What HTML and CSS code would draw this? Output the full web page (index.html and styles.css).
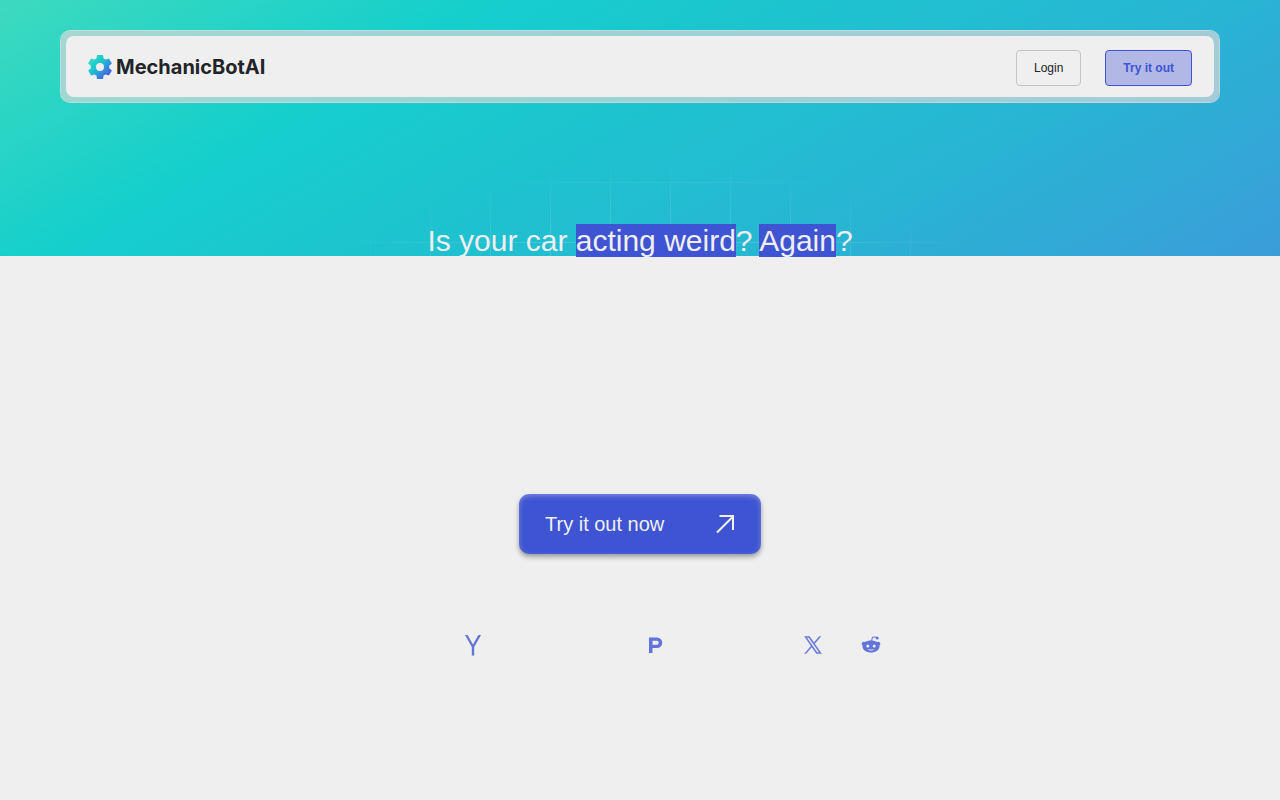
FILE: index.html
```
<!DOCTYPE html>
<html lang="en">
  <head>
    <meta charset="utf-8">
    <meta name="viewport" content="width=device-width, initial-scale=1">
    <title>MechanicBotAI</title>
    <link rel="stylesheet" href="styles.css">
  </head>
  <body>
    <div class="backdrop"></div>
    <div class="page">
      <header class="navbar">
        <nav class="navbar-inner">
          <a class="logo" href="/">
            <svg class="logo-icon" viewBox="0 0 24 24" aria-hidden="true">
              <defs>
                <linearGradient id="gear" x1="0" y1="0" x2="1" y2="1">
                  <stop offset="0.1" stop-color="#3ddabe" />
                  <stop offset="0.4" stop-color="#1bc8cf" />
                  <stop offset="0.85" stop-color="#4760e0" />
                </linearGradient>
              </defs>
              <path fill="url(#gear)" fill-rule="evenodd" d="M9 0h6l.6 3.4 2 1.2L20.900 3.400l3 5.200-2.700 2.200v2.400l2.700 2.200-3 5.200-3.300-1.200-2 1.200L15 24H9l-.6-3.400-2-1.200-3.300 1.200-3-5.200 2.700-2.200v-2.400L.1 8.600l3-5.200 3.300 1.200 2-1.200zM12 8a4 4 0 1 0 0 8 4 4 0 0 0 0-8z" />
            </svg>
            MechanicBotAI
          </a>
          <div class="actions">
            <button class="btn" type="button">Login</button>
            <button class="btn btn-primary" type="button">Try it out</button>
          </div>
        </nav>
      </header>
      <main class="hero">
        <h1>Is your car <mark>acting weird</mark>? <mark>Again</mark>?</h1>
        <button class="cta" type="button">
          Try it out now
          <svg class="cta-icon" viewBox="0 0 20 20" aria-hidden="true">
            <path d="M2 18.500 18 2.500M4.500 2H18v14" />
          </svg>
        </button>
        <div class="social">
          <a class="wide" href="#" aria-label="Hacker News">
            <svg viewBox="0 0 20 20"><path d="M2 0h2.600L10 9.500 15.400 0H18l-6.800 12v8.500H8.800V12z" /></svg>
          </a>
          <a class="medium" href="#" aria-label="Product Hunt">
            <svg viewBox="0 0 20 20"><path fill-rule="evenodd" d="M4 2.500h8a5 5 0 0 1 0 10.500H7.500v5H4zM7.500 5.800v4h4.200a2 2 0 0 0 0-4z" /></svg>
          </a>
          <a href="#" aria-label="X">
            <svg class="x-icon" viewBox="-2 -2 28 28"><path d="M14.234 10.162 22.977 0h-2.072l-7.591 8.824L7.251 0H.258l9.168 13.343L.258 24H2.330l8.016-9.318L16.749 24h6.993zm-2.837 3.299-.929-1.329L3.076 1.560h3.182l5.965 8.532.929 1.329 7.754 11.090h-3.182z" /></svg>
          </a>
          <a href="#" aria-label="Reddit">
            <svg viewBox="0 0 20 20">
              <path fill-rule="evenodd" d="M10 5.500c2.400 0 4.600.6 6.200 1.600a2 2 0 1 1 2.200 3.400c.1.300.1.600.1 1 0 3.400-3.900 6-8.500 6s-8.500-2.600-8.500-6c0-.4 0-.7.100-1A2 2 0 1 1 3.800 7.100C5.400 6.100 7.600 5.500 10 5.500zM6.800 9.400a1.500 1.500 0 1 0 0 3 1.500 1.500 0 0 0 0-3zm6.400 0a1.500 1.500 0 1 0 0 3 1.500 1.500 0 0 0 0-3zM6.500 13.900c1.800 2.100 5.200 2.100 7 0-2 .9-5 .9-7 0z" />
              <path class="antenna" d="m10.500 6 1-4 4.300.300" />
              <circle cx="16.200" cy="2.900" r="1.500" />
            </svg>
          </a>
        </div>
      </main>
    </div>
  </body>
</html>
```
FILE: styles.css
```
* {
  box-sizing: border-box;
}
body {
  margin: 0;
  min-height: 100vh;
  background: #efefef;
  color: #222428;
  font-family: 'Liberation Sans', Arial, sans-serif;
}
button {
  font-family: inherit;
  cursor: pointer;
}
.backdrop {
  position: absolute;
  top: 0;
  left: 0;
  right: 0;
  height: 256px;
  background: linear-gradient(150deg, #3ddabe, #15cfcc 28%, #27b6d3 70%, #3a9dd9);
}
.page {
  position: relative;
}
/* faint grid that fades out around the headline */
.page::before {
  content: '';
  position: absolute;
  top: 2px;
  left: 0;
  right: 0;
  height: 798px;
  background-image: linear-gradient(rgba(239, 239, 239, 0.3) 1px, transparent 1px),
    linear-gradient(90deg, rgba(239, 239, 239, 0.3) 1px, transparent 1px);
  background-size: 60px 60px;
  background-position: 10px 0;
  mask-image: radial-gradient(ellipse 410px 250px at 51% 400px, #000 40%, transparent);
}
.navbar {
  position: relative;
  margin: 0 60px;
  top: 30px;
  padding: 5px;
  border: 1px solid rgba(225, 225, 225, 0.8);
  border-radius: 10px;
  background: rgba(215, 215, 215, 0.7);
  background-clip: padding-box;
}
.navbar-inner {
  display: flex;
  align-items: center;
  justify-content: space-between;
  height: 61px;
  padding: 0 22px;
  border-radius: 8px;
  background: #efefef;
}
.logo {
  display: flex;
  align-items: center;
  gap: 4px;
  color: #222428;
  font: 700 20px/24px Inter, sans-serif;
  text-decoration: none;
}
.logo-icon {
  width: 24px;
  height: 24px;
}
.actions {
  display: flex;
  gap: 24px;
  padding-top: 2px;
}
.btn {
  height: 36px;
  padding: 0 17px;
  border: 1px solid #c4c4c6;
  border-radius: 4px;
  background: transparent;
  color: #222428;
  font-size: 12px;
}
.btn-primary {
  border-color: #3e54d3;
  background: #b1b8e5;
  color: #3e54d3;
  font-weight: 700;
}
.hero {
  position: relative;
  display: flex;
  flex-direction: column;
  align-items: center;
  padding: 151px 20px 0;
}
h1 {
  margin: 0;
  color: #efefef;
  font-size: 30px;
  font-weight: 400;
  line-height: 34px;
}
mark {
  background: #3e54d3;
  color: inherit;
}
.cta {
  display: flex;
  align-items: center;
  justify-content: space-between;
  width: 242px;
  height: 60px;
  margin-top: 236px;
  padding: 0 26px;
  border: 0;
  border-radius: 10px;
  background: #3e54d3;
  box-shadow: inset 0 2px 5px rgba(239, 239, 239, 0.35), 0 3px 5px rgba(0, 0, 0, 0.35);
  color: #efefef;
  font-size: 20px;
}
.cta-icon {
  width: 20px;
  height: 20px;
  fill: none;
  stroke: #efefef;
  stroke-width: 2;
}
.social {
  display: flex;
  justify-content: flex-end;
  gap: 38px;
  width: 482px;
  max-width: 100%;
  margin-top: 81px;
}
.social a {
  width: 20px;
}
.social .wide {
  width: 144px;
}
.social .medium {
  width: 120px;
}
.social svg {
  display: block;
  width: 20px;
  height: 20px;
  overflow: visible;
  fill: #6274da;
}
.social .x-icon {
  stroke: #6274da;
  stroke-width: 0.6;
}
.social .antenna {
  fill: none;
  stroke: #6274da;
}
```
